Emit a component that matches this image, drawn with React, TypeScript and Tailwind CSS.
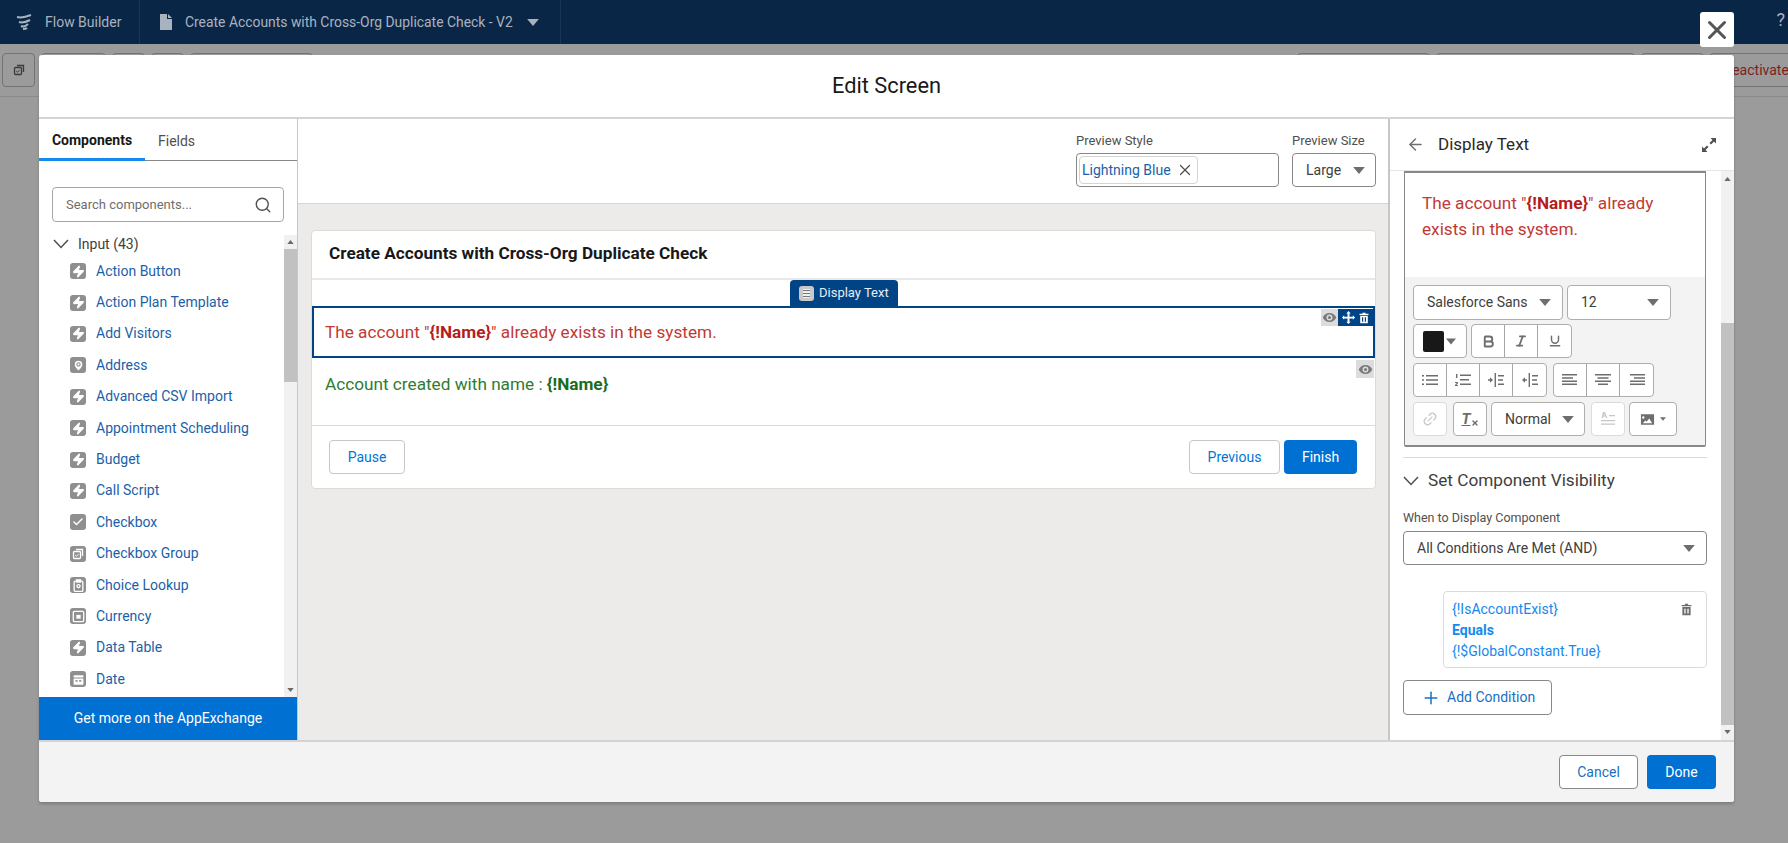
import { Zap, Search, ArrowLeft, Plus, X, Check, MapPin, Bold, Italic, Underline, Link2 } from "lucide-react";
import type { ReactNode } from "react";

type Kind = "bolt" | "pin" | "check" | "group" | "lookup" | "currency" | "date";

const ITEMS: { label: string; kind: Kind }[] = [
  { label: "Action Button", kind: "bolt" },
  { label: "Action Plan Template", kind: "bolt" },
  { label: "Add Visitors", kind: "bolt" },
  { label: "Address", kind: "pin" },
  { label: "Advanced CSV Import", kind: "bolt" },
  { label: "Appointment Scheduling", kind: "bolt" },
  { label: "Budget", kind: "bolt" },
  { label: "Call Script", kind: "bolt" },
  { label: "Checkbox", kind: "check" },
  { label: "Checkbox Group", kind: "group" },
  { label: "Choice Lookup", kind: "lookup" },
  { label: "Currency", kind: "currency" },
  { label: "Data Table", kind: "bolt" },
  { label: "Date", kind: "date" },
];

function Caret({ className = "" }: { className?: string }) {
  return (
    <svg viewBox="0 0 10 6" className={`h-[7px] w-[12px] shrink-0 ${className}`}>
      <path d="M0 0h10L5 6z" fill="currentColor" />
    </svg>
  );
}

function Chevron() {
  return (
    <svg viewBox="0 0 16 10" className="h-[10px] w-[16px] shrink-0" fill="none" stroke="#514f4d" strokeWidth="1.5">
      <path d="M1 1l7 7.5L15 1" />
    </svg>
  );
}

function Glyph({ kind }: { kind: Kind }) {
  switch (kind) {
    case "bolt":
      return <Zap size={13} fill="#fff" stroke="#fff" />;
    case "pin":
      return <MapPin size={13} fill="#fff" stroke="#8f8f8f" strokeWidth={2} />;
    case "check":
      return <Check size={12} stroke="#fff" strokeWidth={3} />;
    case "group":
      return (
        <svg viewBox="0 0 12 12" className="h-[12px] w-[12px]" fill="none" stroke="currentColor" strokeWidth="1.3">
          <rect x="1.5" y="3.5" width="7" height="7" rx="1" />
          <path d="M4 1.5h6.5V8" />
          <path d="M3.2 7l1.3 1.3 2.2-2.4" strokeWidth="1" />
        </svg>
      );
    case "lookup":
      return (
        <svg viewBox="0 0 12 12" className="h-[13px] w-[13px]" fill="none" stroke="#fff" strokeWidth="1.2">
          <rect x="2" y="2" width="8" height="9.5" rx="1" />
          <rect x="4.2" y="0.8" width="3.6" height="2" fill="#fff" />
          <circle cx="6" cy="6.5" r="1.4" />
        </svg>
      );
    case "currency":
      return (
        <svg viewBox="0 0 12 12" className="h-[13px] w-[13px]" fill="none" stroke="#fff" strokeWidth="1.2">
          <rect x="1.2" y="1.2" width="9.6" height="9.6" rx="1" />
          <rect x="4" y="4.5" width="4" height="3.5" fill="#fff" stroke="none" />
        </svg>
      );
    case "date":
      return (
        <svg viewBox="0 0 12 12" className="h-[13px] w-[13px]" fill="#fff">
          <rect x="1.5" y="2" width="9" height="2.2" rx="0.5" />
          <rect x="1.5" y="5" width="9" height="5.8" rx="0.5" />
          <rect x="3.2" y="6.5" width="2" height="1.5" fill="#8f8f8f" />
          <rect x="6.6" y="6.5" width="2" height="1.5" fill="#8f8f8f" />
        </svg>
      );
  }
}

function Trash({ className = "" }: { className?: string }) {
  return (
    <svg viewBox="0 0 12 12" className={className} fill="currentColor">
      <path d="M4.5 0.8h3v1h3v1.2h-9V1.8h3zM2.2 3.8h7.6v7.4H2.2zM4 5.3v4.4h1.2V5.3zM6.8 5.3v4.4H8V5.3z" fillRule="evenodd" />
    </svg>
  );
}

function Eye() {
  return (
    <svg viewBox="0 0 16 12" className="h-[11px] w-[15px]" fill="#7a7a7a">
      <path
        d="M8 1C4.6 1 1.8 3.2.6 6c1.2 2.8 4 5 7.4 5s6.2-2.2 7.4-5C14.2 3.2 11.4 1 8 1zm0 8.2A3.2 3.2 0 1 1 8 2.8a3.2 3.2 0 0 1 0 6.4zM8 4.3a1.7 1.7 0 1 0 0 3.4 1.7 1.7 0 0 0 0-3.4z"
        fillRule="evenodd"
      />
    </svg>
  );
}

function Btn({ children, className = "" }: { children: ReactNode; className?: string }) {
  return (
    <div className={`flex h-[34px] items-center justify-center rounded-[4px] border border-[#c9c7c5] bg-white text-[14px] text-[#0176d3] ${className}`}>
      {children}
    </div>
  );
}

function ToolSelect({ label, className }: { label: string; className: string }) {
  return (
    <div className={`flex h-[35px] items-center justify-between rounded-[4px] border border-[#b0adab] bg-white pl-[13px] pr-[11px] text-[14px] text-[#3e3e3c] ${className}`}>
      <span>{label}</span>
      <Caret className="text-[#706e6b]" />
    </div>
  );
}

function ToolGroup({ items }: { items: ReactNode[] }) {
  return (
    <div className="flex h-[34px] divide-x divide-[#a8a6a4] rounded-[4px] border border-[#b0adab] bg-white text-[#706e6b]">
      {items.map((it, i) => (
        <div key={i} className="flex w-[33px] items-center justify-center">
          {it}
        </div>
      ))}
    </div>
  );
}

const ic = "h-[14px] w-[16px]";

const ListIcon = (
  <svg viewBox="0 0 16 14" className={ic} fill="currentColor">
    <path d="M0 2h2v1.4H0zM4 2h12v1.4H4zM0 6.3h2v1.4H0zM4 6.3h12v1.4H4zM0 10.6h2V12H0zM4 10.6h12V12H4z" />
  </svg>
);
const NumIcon = (
  <svg viewBox="0 0 16 14" className={ic} fill="currentColor">
    <path d="M1 1h1.4v4H1zM0 9h3v1.2L1.4 12H3v1H0v-1l1.7-2H0zM5 1.5h11v1.4H5zM5 6h9v1.4H5zM5 10.5h11v1.4H5z" />
  </svg>
);
const IndentIcon = (
  <svg viewBox="0 0 16 14" className={ic} fill="currentColor">
    <path d="M0 6.2h2v-2l3 2.8-3 2.8v-2H0zM6.6 0h1.4v14H6.6zM10 2h6v1.4h-6zM10 6.3h5v1.4h-5zM10 10.6h6V12h-6z" />
  </svg>
);
const OutdentIcon = (
  <svg viewBox="0 0 16 14" className={ic} fill="currentColor">
    <path d="M5 6.2H3v-2L0 7l3 2.8v-2h2zM6.6 0h1.4v14H6.6zM10 2h6v1.4h-6zM10 6.3h5v1.4h-5zM10 10.6h6V12h-6z" />
  </svg>
);
const AlignL = (
  <svg viewBox="0 0 16 14" className={ic} fill="currentColor">
    <path d="M0 1h15v1.5H0zM0 4.2h11v1.5H0zM0 7.4h15v1.5H0zM0 10.6h15v1.5H0z" />
  </svg>
);
const AlignC = (
  <svg viewBox="0 0 16 14" className={ic} fill="currentColor">
    <path d="M0 1h16v1.5H0zM2.5 4.2h11v1.5h-11zM0 7.4h16v1.5H0zM3 10.6h10v1.5H3z" />
  </svg>
);
const AlignR = (
  <svg viewBox="0 0 16 14" className={ic} fill="currentColor">
    <path d="M1 1h15v1.5H1zM5 4.2h11v1.5H5zM1 7.4h15v1.5H1zM1 10.6h15v1.5H1z" />
  </svg>
);

function ScrollArrow({ up }: { up?: boolean }) {
  return (
    <svg viewBox="0 0 8 5" className="h-[4px] w-[7px] shrink-0" fill="#6b6b6b">
      <path d={up ? "M0 5h8L4 0z" : "M0 0h8L4 5z"} />
    </svg>
  );
}

function LeftPanel() {
  return (
    <aside className="flex w-[259px] shrink-0 flex-col border-r border-[#c9c7c5] bg-white">
      <div className="flex h-[42px] shrink-0 border-b border-[#8a8886] text-[14px]">
        <div className="-mb-px flex w-[106px] items-center justify-center border-b-[3px] border-[#1589ee] pt-[3px] font-bold text-[#181818]">
          Components
        </div>
        <div className="flex items-center pl-[13px] pt-[3px] text-[#514f4d]">Fields</div>
      </div>
      <div className="mx-[13px] mt-[26px] flex h-[35px] shrink-0 items-center justify-between rounded-[4px] border border-[#a8a6a4] pl-[13px] pr-[11px]">
        <span className="text-[13px] text-[#706e6b]">Search components...</span>
        <Search size={18} strokeWidth={1.8} className="text-[#514f4d]" />
      </div>
      <div className="mt-[13px] flex min-h-0 flex-1">
        <div className="min-w-0 flex-1 overflow-hidden pl-[14px]">
          <div className="flex h-[18px] items-center text-[14px] text-[#3e3e3c]">
            <Chevron />
            <span className="ml-[9px]">Input (43)</span>
          </div>
          <div className="mt-[2.5px] pl-[17px]">
            {ITEMS.map((item) => (
              <div key={item.label} className="flex h-[31.4px] items-center gap-[10px]">
                <span className="flex h-[16px] w-[16px] items-center justify-center rounded-[3px] bg-[#8f8f8f] text-white">
                  <Glyph kind={item.kind} />
                </span>
                <span className="text-[14px] text-[#1b5fa8]">{item.label}</span>
              </div>
            ))}
          </div>
        </div>
        <div className="flex w-[13px] shrink-0 flex-col items-center bg-[#f1f1f1] py-[5px]">
          <ScrollArrow up />
          <div className="mt-[5px] h-[133px] w-full bg-[#c1c1c1]" />
          <div className="flex-1" />
          <ScrollArrow />
        </div>
      </div>
      <div className="flex h-[43px] shrink-0 items-center justify-center bg-[#0070d2] text-[14px] text-white">
        Get more on the AppExchange
      </div>
    </aside>
  );
}

function Canvas() {
  return (
    <main className="flex min-w-0 flex-1 flex-col">
      <div className="flex h-[85px] shrink-0 items-start justify-end gap-[13px] border-b border-[#d4d4d4] bg-white pr-[12px] pt-[12px]">
        <div className="w-[203px]">
          <div className="mb-[2px] text-[13px] leading-[20px] text-[#514f4d]">Preview Style</div>
          <div className="flex h-[34px] items-center rounded-[4px] border border-[#8a8886] pl-[2px]">
            <div className="flex h-[28px] w-[119px] items-center gap-[5px] rounded-[4px] border border-[#d4d4d4] pl-[2px] text-[14px] text-[#1b5fa8]">
              <span>Lightning Blue</span>
              <X size={18} strokeWidth={1.6} className="text-[#514f4d]" />
            </div>
          </div>
        </div>
        <div className="w-[84px]">
          <div className="mb-[2px] text-[13px] leading-[20px] text-[#514f4d]">Preview Size</div>
          <div className="flex h-[34px] items-center justify-between rounded-[4px] border border-[#8a8886] pl-[13px] pr-[10px] text-[14px] text-[#3e3e3c]">
            <span>Large</span>
            <Caret className="text-[#706e6b]" />
          </div>
        </div>
      </div>
      <div className="min-h-0 flex-1 bg-[#ecebea] pl-[13px] pr-[12px] pt-[26px]">
        <div className="rounded-[4px] border border-[#dddbda] bg-white">
          <div className="flex h-[49px] items-center border-b-2 border-[#e8e8e8] pb-[2px] pl-[17px] text-[17.2px] font-bold text-[#181818]">
            Create Accounts with Cross-Org Duplicate Check
          </div>
          <div className="flex h-[26px] justify-center pl-[1px]">
            <div className="flex w-[108px] items-center gap-[5px] rounded-t-[4px] bg-[#014486] pl-[9px] text-[13px] text-[#e6edf5]">
              <span className="flex h-[15px] w-[15px] items-center justify-center rounded-[3px] bg-[#c9c9c9]">
                <span className="flex h-[9px] w-[7px] flex-col justify-between bg-[#efefef] py-[1px]">
                  <span className="h-px bg-[#777]" />
                  <span className="h-px bg-[#777]" />
                  <span className="h-px bg-[#777]" />
                </span>
              </span>
              Display Text
            </div>
          </div>
          <div className="relative flex h-[52px] items-center border-2 border-[#014486] pl-[11px] pt-[1px] text-[17.2px] text-[#c23934]">
            <span>
              The account "<b className="text-[#b71c1c]">{"{!Name}"}</b>" already exists in the system.
            </span>
            <div className="absolute right-0 top-[1px] flex h-[17px]">
              <div className="flex w-[17px] items-center justify-center bg-[#dcdcdc]">
                <Eye />
              </div>
              <div className="flex w-[35px] items-center justify-center gap-[3px] bg-[#014486] text-white">
                <svg viewBox="0 0 12 12" className="h-[13px] w-[13px]" fill="currentColor">
                  <path d="M6 0l2 2.2H6.9v3H10V4l2 2-2 2V6.900H6.900V10H8l-2 2-2-2h1.100V6.900H2V8L0 6l2-2v1.200h3.100v-3H4z" />
                </svg>
                <Trash className="h-[12px] w-[12px]" />
              </div>
            </div>
          </div>
          <div className="relative flex h-[68px] items-start border-b border-[#dddbda] pl-[13px] pt-[14px] text-[17.2px] text-[#2e7d32]">
            <span>
              Account created with name : <b className="text-[#1b6b1e]">{"{!Name}"}</b>
            </span>
            <div className="absolute right-[1px] top-[2px] flex h-[18px] w-[18px] items-center justify-center bg-[#dcdcdc]">
              <Eye />
            </div>
          </div>
          <div className="flex h-[62px] items-center justify-between pl-[17px] pr-[18px]">
            <Btn className="w-[76px]">Pause</Btn>
            <div className="flex gap-[4px]">
              <Btn className="w-[91px]">Previous</Btn>
              <div className="flex h-[34px] w-[73px] items-center justify-center rounded-[4px] bg-[#0070d2] text-[14px] text-white">
                Finish
              </div>
            </div>
          </div>
        </div>
      </div>
    </main>
  );
}

function RightPanel() {
  return (
    <aside className="flex w-[346px] shrink-0 flex-col border-l-2 border-[#c9c7c5] bg-white">
      <div className="flex h-[52px] shrink-0 items-center justify-between border-b border-[#e5e5e5] pl-[16px] pr-[17px]">
        <div className="flex items-center gap-[13px]">
          <ArrowLeft size={19} strokeWidth={1.8} className="text-[#706e6b]" />
          <span className="text-[17px] text-[#2b2826]">Display Text</span>
        </div>
        <svg viewBox="0 0 16 16" className="h-[16px] w-[16px]" fill="#514f4d">
          <path d="M9.5 1H15v5.500l-2-2-3 3L8.500 6l3-3zM6.500 15H1V9.500l2 2 3-3L7.500 10l-3 3z" />
        </svg>
      </div>
      <div className="flex min-h-0 flex-1">
        <div className="min-w-0 flex-1 pl-[14px] pr-[15px]">
          <div className="rounded-b-[2px] border-x border-b-2 border-t-2 border-[#8a8886] bg-white">
            <div className="h-[104px] pl-[17px] pr-[12px] pt-[17px] text-[17.2px] leading-[26px] text-[#c23934]">
              The account "<b className="text-[#b71c1c]">{"{!Name}"}</b>" already exists in the system.
            </div>
            <div className="flex flex-col gap-[4px] bg-[#f3f3f3] px-[8px] pb-[9px] pt-[8px]">
              <div className="flex gap-[4px]">
                <ToolSelect label="Salesforce Sans" className="w-[150px]" />
                <ToolSelect label="12" className="w-[104px]" />
              </div>
              <div className="flex gap-[4px]">
                <div className="flex h-[34px] w-[54px] items-center gap-[2px] rounded-[4px] border border-[#b0adab] bg-white pl-[9px] text-[#706e6b]">
                  <span className="h-[21px] w-[21px] rounded-[2px] bg-[#181818]" />
                  <Caret className="!w-[10px]" />
                </div>
                <ToolGroup
                  items={[
                    <Bold key="b" size={15} strokeWidth={3} />,
                    <Italic key="i" size={14} strokeWidth={3} />,
                    <Underline key="u" size={14} strokeWidth={2.5} />,
                  ]}
                />
              </div>
              <div className="mt-[1px] flex gap-[6px]">
                <ToolGroup items={[ListIcon, NumIcon, IndentIcon, OutdentIcon]} />
                <ToolGroup items={[AlignL, AlignC, AlignR]} />
              </div>
              <div className="mt-[1px] flex gap-[4px]">
                <div className="flex h-[34px] w-[34px] items-center justify-center rounded-[4px] border border-[#dddbda] bg-white text-[#c9c7c5]">
                  <Link2 size={16} className="-rotate-45" />
                </div>
                <div className="ml-[2px] flex h-[34px] w-[34px] items-center justify-center rounded-[4px] border border-[#b0adab] bg-white text-[#706e6b]">
                  <span className="text-[15px] font-bold italic underline">T</span>
                  <X size={8} strokeWidth={4} className="mt-[8px]" />
                </div>
                <div className="flex h-[34px] w-[94px] items-center justify-between rounded-[4px] border border-[#b0adab] bg-white pl-[13px] pr-[10px] text-[14px] text-[#3e3e3c]">
                  <span>Normal</span>
                  <Caret className="text-[#706e6b]" />
                </div>
                <div className="ml-[2px] flex h-[34px] w-[34px] flex-col items-center justify-center rounded-[4px] border border-[#dddbda] bg-white text-[#c9c7c5]">
                  <svg viewBox="0 0 16 14" className="h-[14px] w-[16px]" fill="currentColor">
                    <path d="M3 0h2l2.400 6H6l-.5-1.400h-2L3 6H1.600zM3.900 3.600h1.200L4.500 2zM9 3h6v1.200H9zM1 8h14v1.200H1zM1 11.500h14v1.200H1z" />
                  </svg>
                </div>
                <div className="flex h-[34px] w-[48px] items-center justify-center gap-[5px] rounded-[4px] border border-[#b0adab] bg-white text-[#706e6b]">
                  <svg viewBox="0 0 16 13" className="h-[13px] w-[15px]" fill="currentColor">
                    <path d="M1 1h14v11H1zM3.500 3a1.300 1.300 0 1 0 0 2.600 1.300 1.300 0 0 0 0-2.600zM3 10.500h10L9.800 5.500 7 9 5.600 7.600z" fillRule="evenodd" />
                  </svg>
                  <Caret className="!h-[4px] !w-[6px]" />
                </div>
              </div>
            </div>
          </div>
          <div className="-mx-[1px] mt-[10px] border-t border-[#dddbda] pt-[13px]">
            <div className="flex h-[20px] items-center text-[17.2px] text-[#3e3e3c]">
              <Chevron />
              <span className="ml-[9px]">Set Component Visibility</span>
            </div>
            <div className="mt-[18px] text-[12.5px] leading-[18px] text-[#514f4d]">When to Display Component</div>
            <div className="mt-[4px] flex h-[34px] items-center justify-between rounded-[4px] border border-[#8a8886] pl-[13px] pr-[11px] text-[14px] text-[#3e3e3c]">
              <span>All Conditions Are Met (AND)</span>
              <Caret className="text-[#706e6b]" />
            </div>
            <div className="ml-[40px] mt-[26px] flex h-[77px] items-start justify-between rounded-[4px] border border-[#dddbda] pl-[8px] pr-[13px] pt-[7px] text-[14px] leading-[21px] text-[#1589ee]">
              <div>
                <div>{"{!IsAccountExist}"}</div>
                <div className="font-bold">Equals</div>
                <div>{"{!$GlobalConstant.True}"}</div>
              </div>
              <Trash className="mt-[4px] h-[13px] w-[13px] text-[#706e6b]" />
            </div>
            <div className="mt-[12px] flex h-[35px] w-[149px] items-center gap-[6px] rounded-[4px] border border-[#8a8886] pl-[17px] text-[14px] text-[#1b6fc2]">
              <Plus size={20} strokeWidth={1.8} />
              <span>Add Condition</span>
            </div>
          </div>
        </div>
        <div className="flex w-[13px] shrink-0 flex-col items-center bg-[#f1f1f1] py-[6px]">
          <ScrollArrow up />
          <div className="mt-[142px] h-[402px] w-full bg-[#c1c1c1]" />
          <div className="flex-1" />
          <ScrollArrow />
        </div>
      </div>
    </aside>
  );
}

export default function App() {
  return (
    <div className="relative h-[843px] w-[1788px] overflow-hidden bg-[#9b9b9b] [font-family:Roboto,sans-serif]">
      {/* app bar behind the overlay */}
      <header className="flex h-[44px] items-stretch bg-[#0a2647] text-[14px] text-[#a9b2bf]">
        <div className="flex w-[140px] items-center gap-[12px] border-r border-[#1c3557] pl-[15px]">
          <svg viewBox="0 0 18 18" className="h-[18px] w-[18px]" fill="none" stroke="#a9b2bf" strokeWidth="2">
            <path d="M2 4c4 1 9 0 14-2M4 9c3 1 7 0 11-2M6 13c2 1 5 0 7-2M8 16c1 0 3 0 4-1" />
          </svg>
          <span>Flow Builder</span>
        </div>
        <div className="flex w-[421px] items-center border-r border-[#1c3557] pl-[19px]">
          <svg viewBox="0 0 14 16" className="h-[16px] w-[14px]" fill="#a9b2bf">
            <path d="M1 0h7v5h5v11H1zM9 0l4 4H9z" />
          </svg>
          <span className="ml-[12px] text-[13.9px]">Create Accounts with Cross-Org Duplicate Check - V2</span>
          <Caret className="ml-[14px]" />
        </div>
        <div className="ml-auto flex items-center pr-[3px] pb-[6px] text-[18px]">?</div>
      </header>
      <div className="flex h-[53px] items-start gap-[6px] border-b border-[#8a8a8a] pl-[2px] pt-[9px] text-[14px]">
        <div className="flex h-[34px] w-[33px] items-center justify-center rounded-[4px] border border-[#737373] text-[#3b3b3b]">
          <Glyph kind="group" />
        </div>
        <div className="h-[34px] w-[65px] rounded-[4px] border border-[#737373]" />
        <div className="h-[34px] w-[33px] rounded-[4px] border border-[#737373]" />
        <div className="h-[34px] w-[33px] rounded-[4px] border border-[#737373]" />
        <div className="h-[34px] w-[123px] rounded-[4px] border border-[#737373]" />
        <div className="flex-1" />
        <div className="h-[34px] w-[133px] rounded-[4px] border border-[#737373]" />
        <div className="h-[34px] w-[199px] rounded-[4px] border border-[#737373]" />
        <div className="h-[34px] w-[63px] rounded-[4px] border border-[#737373]" />
        <div className="flex h-[34px] w-[78px] items-center overflow-hidden whitespace-nowrap rounded-l-[4px] border border-r-0 border-[#737373] pl-[12px] text-[#7d1f1c]">
          Deactivate
        </div>
      </div>

      {/* modal */}
      <div className="absolute left-[39px] top-[55px] flex h-[747px] w-[1695px] flex-col rounded-[3px] bg-white shadow-[0_2px_3px_rgba(0,0,0,0.2)]">
        <div className="flex h-[64px] shrink-0 items-center justify-center border-b-2 border-[#d4d4d4] text-[21.8px] text-[#181818]">
          Edit Screen
        </div>
        <div className="flex min-h-0 flex-1">
          <LeftPanel />
          <Canvas />
          <RightPanel />
        </div>
        <div className="flex h-[62px] shrink-0 items-center justify-end gap-[9px] rounded-b-[3px] border-t-2 border-[#d4d4d4] bg-[#f3f3f3] pr-[18px]">
          <Btn className="w-[79px] !border-[#8a8886] !text-[#1b6fc2]">Cancel</Btn>
          <div className="flex h-[34px] w-[69px] items-center justify-center rounded-[4px] bg-[#0070d2] text-[14px] text-white">
            Done
          </div>
        </div>
      </div>

      <div className="absolute left-[1700px] top-[12px] flex h-[35px] w-[34px] items-center justify-center rounded-[3px] bg-white text-[#555]">
        <X size={30} strokeWidth={2.4} />
      </div>
    </div>
  );
}
